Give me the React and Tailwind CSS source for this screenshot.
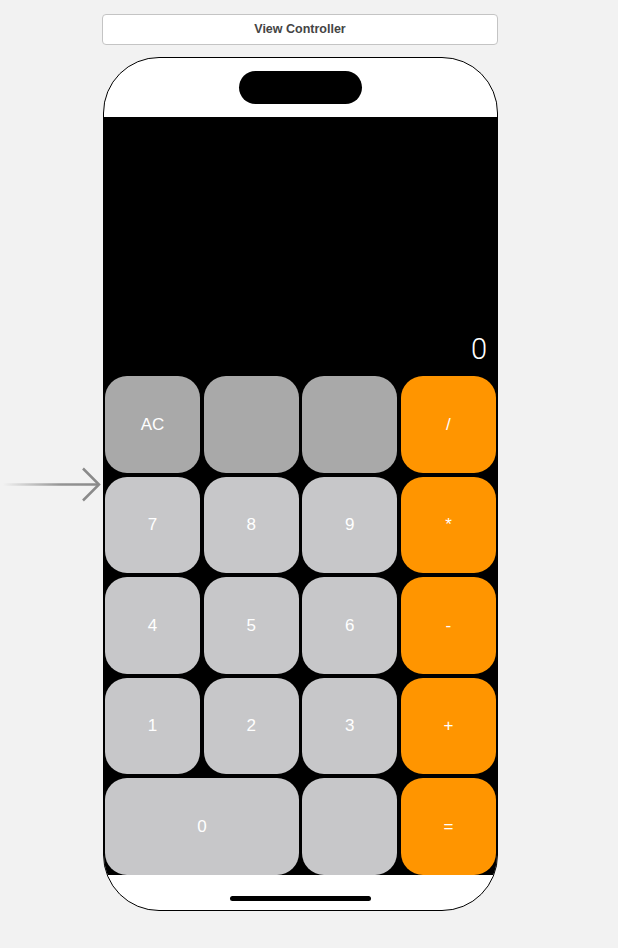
import React from "react";

const font = { fontFamily: '"Liberation Sans", Arial, sans-serif' };

function Key({ label, kind, span }) {
  const color =
    kind === "op"
      ? "bg-[#ff9500]"
      : kind === "fn"
      ? "bg-[#a9a9a9]"
      : "bg-[#c7c7c9]";
  return (
    <div
      className={`${color} ${span ? "col-span-2" : ""} rounded-[22px] flex items-center justify-center text-white text-[17px]`}
    >
      {label}
    </div>
  );
}

export default function App() {
  const rows = [
    [["AC", "fn"], ["", "fn"], ["", "fn"], ["/", "op"]],
    [["7"], ["8"], ["9"], ["*", "op"]],
    [["4"], ["5"], ["6"], ["-", "op"]],
    [["1"], ["2"], ["3"], ["+", "op"]],
  ];
  return (
    <div className="w-[618px] h-[948px] bg-[#f2f2f2] relative" style={font}>
      <div className="pt-[14px] pl-[102px]">
        <div className="w-[396px] h-[31px] bg-white border border-[#c4c4c4] rounded-[4px] flex items-center justify-center text-[12.5px] font-bold text-[#444]">
          View Controller
        </div>
      </div>

      <div className="pt-[12px] pl-[103px]">
        <div className="w-[395px] h-[854px] rounded-[56px] border border-black bg-white overflow-hidden flex flex-col">
          <div className="h-[59px] flex justify-center pt-[13px]">
            <div className="w-[123px] h-[33px] bg-black rounded-full" />
          </div>
          <div className="h-[758px] bg-black flex flex-col">
            <div className="h-[259px] flex items-end justify-end pr-[10px] pb-[13px]">
              <span className="text-white text-[29px] leading-[28px]" style={{ fontFamily: 'Roboto, "Liberation Sans", sans-serif', fontWeight: 300 }}>0</span>
            </div>
            <div className="px-[1px] grid grid-cols-4 gap-x-[3.5px] gap-y-[4px] grid-rows-[repeat(5,96.5px)]">
              {rows.flat().map(([l, k], i) => (
                <Key key={i} label={l} kind={k} />
              ))}
              <Key label="0" span />
              <Key label="" />
              <Key label="=" kind="op" />
            </div>
          </div>
          <div className="flex-1 flex justify-center pt-[21px]">
            <div className="w-[141px] h-[5px] bg-black rounded-full" />
          </div>
        </div>
      </div>

      <svg className="absolute left-0 top-[466px]" width="104" height="38" viewBox="0 0 104 38">
        <defs>
          <linearGradient id="g" gradientUnits="userSpaceOnUse" x1="3" y1="0" x2="99" y2="0">
            <stop offset="0" stopColor="#8a8a8a" stopOpacity="0" />
            <stop offset="0.6" stopColor="#8a8a8a" stopOpacity="0.9" />
            <stop offset="1" stopColor="#8a8a8a" />
          </linearGradient>
        </defs>
        <rect x="3" y="17.25" width="96" height="2.5" fill="url(#g)" />
        <polyline points="83,2.5 99,18.5 83,34.5" fill="none" stroke="#8a8a8a" strokeWidth="2.5" />
      </svg>
    </div>
  );
}
